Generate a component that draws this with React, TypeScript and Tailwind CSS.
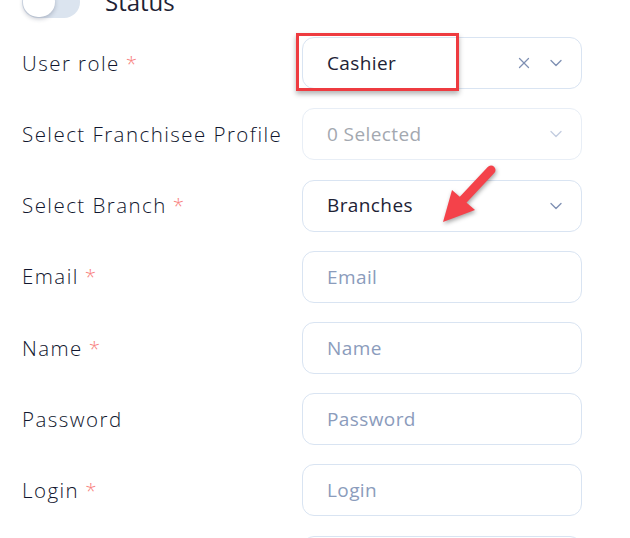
import { ChevronDown, X } from 'lucide-react';

const font = { fontFamily: '"Open Sans", "Liberation Sans", sans-serif' };

const Label = ({ text, required }: { text: string; required?: boolean }) => (
  <div className="pl-[22px] text-[20.5px] font-light tracking-[1.45px] text-[#10162e] whitespace-nowrap">
    {text}
    {required && <span className="ml-[6px] text-[#f8837f]">*</span>}
  </div>
);

const Field = ({
  value,
  placeholder,
  select,
  clearable,
  disabled,
}: {
  value?: string;
  placeholder?: string;
  select?: boolean;
  clearable?: boolean;
  disabled?: boolean;
}) => (
  <div
    className={`flex h-[52px] w-[280px] items-center rounded-[12px] border bg-white pl-[24px] pr-[15px] ${
      disabled ? 'border-[#e8eef6]' : 'border-[#d9e4f2]'
    }`}
  >
    <span
      className={`flex-1 text-[19px] tracking-[0.4px] ${
        value ? 'text-[#1e2235]' : disabled ? 'text-[#a3a8b0]' : 'text-[#8b9cbc]'
      }`}
    >
      {value ?? placeholder}
    </span>
    {clearable && <X size={18} strokeWidth={1.7} className="mr-[13px] text-[#7f90b3]" />}
    {select && (
      <ChevronDown
        size={20}
        strokeWidth={1.6}
        className={disabled ? 'text-[#c3cde0]' : 'text-[#7f90b3]'}
      />
    )}
  </div>
);

const rows = [
  { label: 'Select Franchisee Profile', placeholder: '0 Selected', select: true, disabled: true },
  { label: 'Select Branch', required: true, value: 'Branches', select: true },
  { label: 'Email', required: true, placeholder: 'Email' },
  { label: 'Name', required: true, placeholder: 'Name' },
  { label: 'Password', placeholder: 'Password' },
  { label: 'Login', required: true, placeholder: 'Login' },
];

export default function App() {
  return (
    <div className="relative h-[538px] w-[630px] overflow-hidden bg-white" style={font}>
      <div className="flex flex-col gap-[19.2px]">
        <div className="mt-[-14px] flex h-[32px] items-center">
          <div className="ml-[22px] relative h-[32px] w-[58px] rounded-full bg-[#dbe4ef]">
            <div className="absolute left-[1px] top-[1px] h-[30px] w-[32px] rounded-full bg-white shadow-[0_2px_4px_rgba(30,40,70,0.25)]" />
          </div>
          <span className="ml-[25px] text-[24px] text-[#1e2235]">Status</span>
        </div>

        <div className="grid grid-cols-[302px_280px] items-center">
          <Label text="User role" required />
          <div className="relative">
            <Field value="Cashier" select clearable />
            <div className="absolute left-[-6px] top-[-4px] h-[58px] w-[163px] border-[3px] border-[#ee3b40] shadow-[0_3px_5px_rgba(0,0,0,0.3)]" />
          </div>
        </div>

        {rows.map((r) => (
          <div key={r.label} className="grid grid-cols-[302px_280px] items-center">
            <Label text={r.label} required={r.required} />
            <Field
              value={r.value}
              placeholder={r.placeholder}
              select={r.select}
              disabled={r.disabled}
            />
          </div>
        ))}

        <div className="grid grid-cols-[302px_280px]">
          <div />
          <div className="h-[52px] w-[280px] rounded-[12px] border border-[#d9e4f2]" />
        </div>
      </div>

      <svg
        className="absolute left-[436px] top-[160px]"
        width="64"
        height="68"
        viewBox="0 0 64 68"
        style={{ filter: 'drop-shadow(1px 2px 2px rgba(0,0,0,0.35))' }}
      >
        <line x1="55" y1="10" x2="25" y2="42" stroke="#f4424a" strokeWidth="9" strokeLinecap="round" />
        <polygon points="7,62 16,30 39,50" fill="#f4424a" />
      </svg>
    </div>
  );
}
